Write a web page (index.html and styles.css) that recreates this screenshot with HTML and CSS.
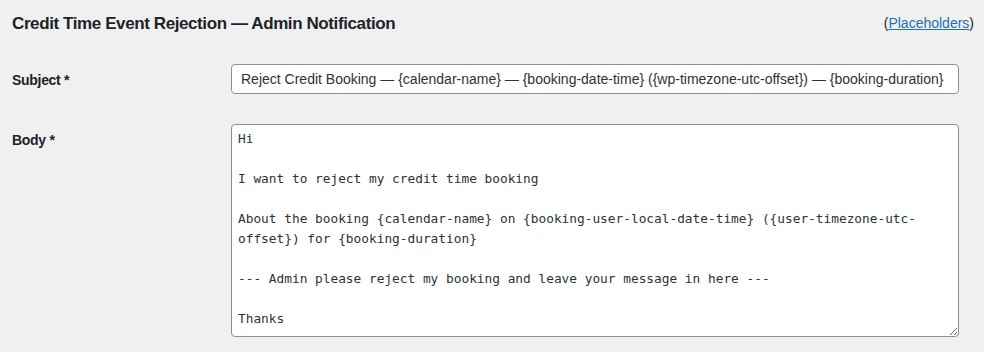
FILE: index.html
```html
<!DOCTYPE html>
<html lang="en">
<head>
    <meta charset="UTF-8">
    <meta name="viewport" content="width=device-width, initial-scale=1.0">
    <title>Credit Time Event Rejection — Admin Notification</title>
    <link rel="stylesheet" href="styles.css">
</head>
<body>
    <div class="wrap">
        <div class="section-head">
            <h2>Credit Time Event Rejection — Admin Notification</h2>
            <span class="placeholders">(<a href="#">Placeholders</a>)</span>
        </div>

        <div class="form-table">
            <div class="form-row">
                <label for="subject">Subject *</label>
                <input type="text" id="subject" value="Reject Credit Booking — {calendar-name} — {booking-date-time} ({wp-timezone-utc-offset}) — {booking-duration}">
            </div>

            <div class="form-row">
                <label for="body">Body *</label>
                <textarea id="body" spellcheck="false">Hi

I want to reject my credit time booking

About the booking {calendar-name} on {booking-user-local-date-time} ({user-timezone-utc-offset}) for {booking-duration}

--- Admin please reject my booking and leave your message in here ---

Thanks</textarea>
            </div>
        </div>
    </div>
</body>
</html>
```

FILE: styles.css
```css
body {
    margin: 0;
    background: #f0f0f1;
    color: #1d2327;
    font-family: "Segoe UI", "Liberation Sans", Arial, sans-serif;
    font-size: 14px;
}
.wrap {
    padding: 0 10px 0 12px;
}
.section-head {
    display: flex;
    justify-content: space-between;
    align-items: center;
    height: 46px;
}
h2 {
    margin: 0;
    padding-top: 1px;
    font-size: 17px;
    font-weight: 600;
    letter-spacing: -0.4px;
    color: #1d2327;
}
.placeholders {
    font-size: 14px;
    color: #1d2327;
    padding-left: 2px;
}
.placeholders a {
    color: #2271b1;
    text-decoration: underline;
}
.form-table {
    display: flex;
    flex-direction: column;
    gap: 30px;
    padding-top: 18px;
}
.form-row {
    display: grid;
    grid-template-columns: 219px 1fr;
    align-items: start;
}
.form-row label {
    font-weight: 600;
    line-height: 18px;
    padding-top: 7px;
    letter-spacing: -0.3px;
}
input[type="text"], textarea {
    box-sizing: border-box;
    width: 728px;
    border: 1px solid #8c8f94;
    border-radius: 4px;
    background: #fff;
    color: #2c3338;
    margin: 0;
}
input[type="text"] {
    height: 30px;
    padding: 0 6px 0 9px;
    font-family: "Segoe UI", "Liberation Sans", Arial, sans-serif;
    font-size: 14px;
}
textarea {
    height: 213px;
    padding: 4px 6px 2px;
    font-family: "DejaVu Sans Mono", "Liberation Mono", monospace;
    font-size: 12.8px;
    line-height: 20px;
    resize: both;
}
input:focus, textarea:focus {
    outline: none;
}
```
